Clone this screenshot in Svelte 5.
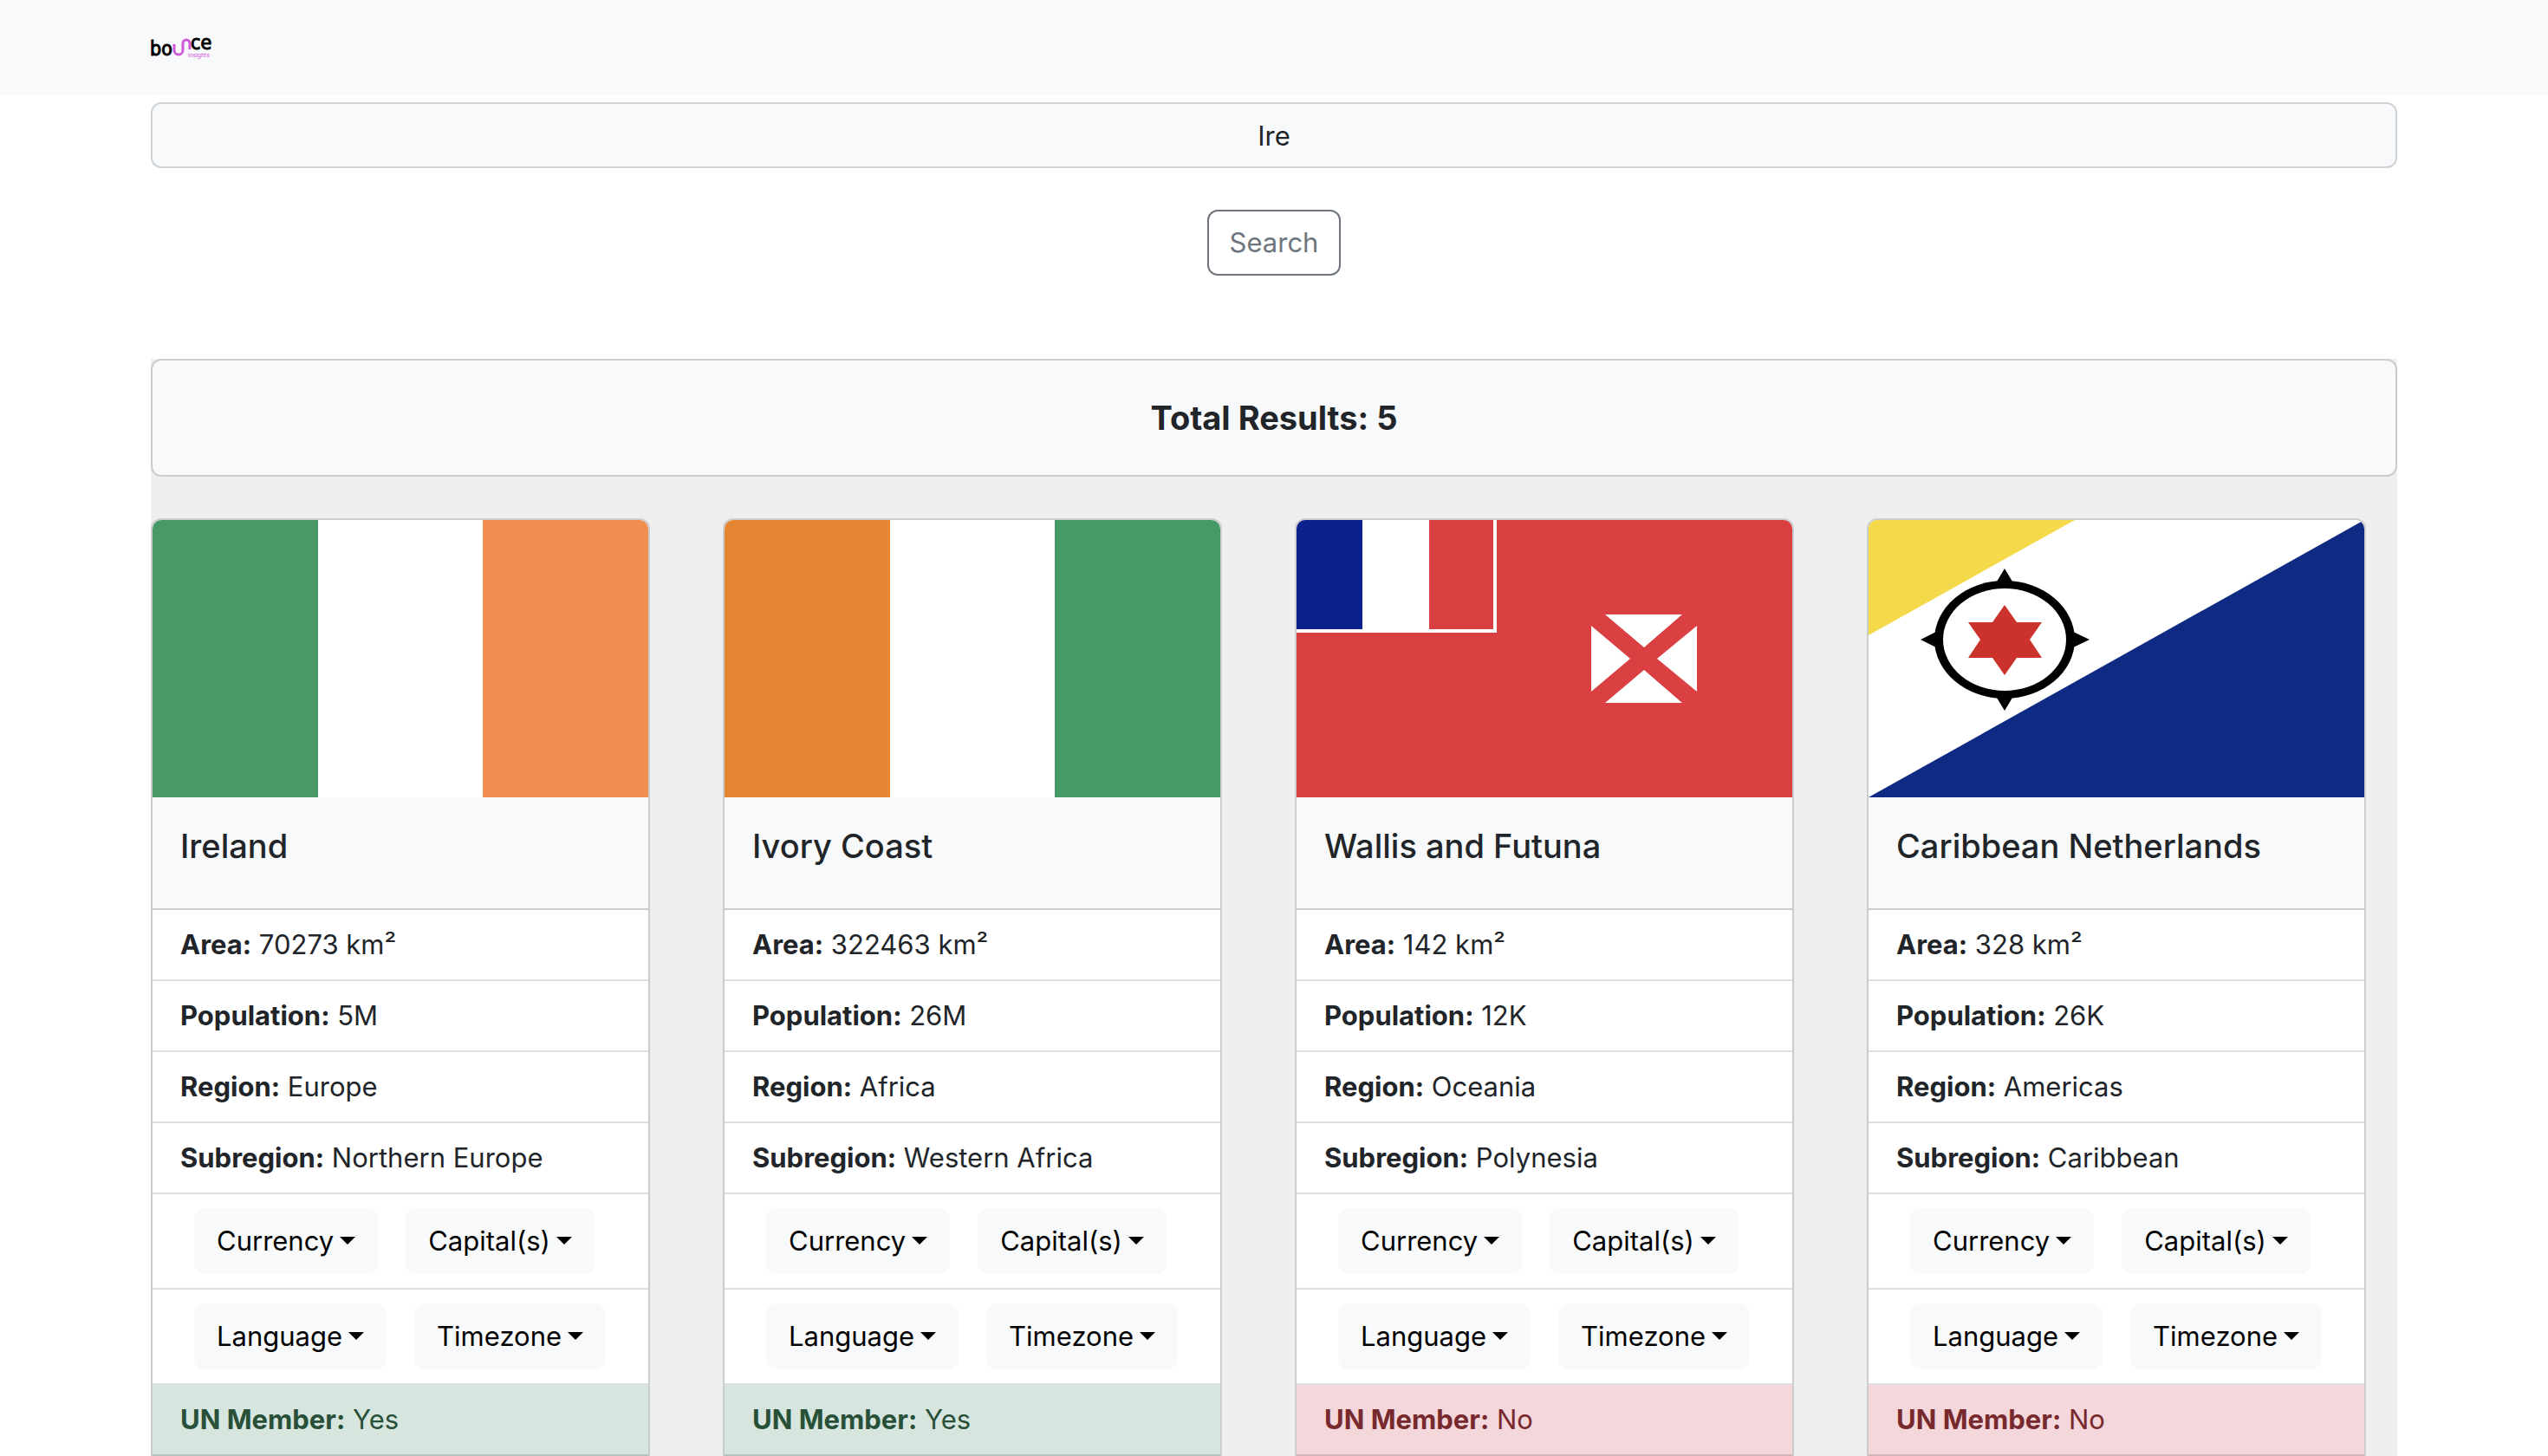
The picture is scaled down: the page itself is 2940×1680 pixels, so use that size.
<script>
  let query = $state('Ire');

  const menus = [
    ['Currency', 'Capital(s)'],
    ['Language', 'Timezone'],
  ];

  const countries = [
    { name: 'Ireland', flag: 'ie', area: 70273, population: '5M', region: 'Europe', subregion: 'Northern Europe', unMember: true },
    { name: 'Ivory Coast', flag: 'ci', area: 322463, population: '26M', region: 'Africa', subregion: 'Western Africa', unMember: true },
    { name: 'Wallis and Futuna', flag: 'wf', area: 142, population: '12K', region: 'Oceania', subregion: 'Polynesia', unMember: false },
    { name: 'Caribbean Netherlands', flag: 'bq', area: 328, population: '26K', region: 'Americas', subregion: 'Caribbean', unMember: false },
  ];
</script>

{#snippet tricolour(left, right)}
  <rect width="572" height="320" fill="#ffffff" />
  <rect width="191" height="320" fill={left} />
  <rect x="381" width="191" height="320" fill={right} />
{/snippet}

<header class="navbar">
  <a class="brand" href="/" aria-label="bounce insights">
    <svg class="logo" viewBox="0 0 72 28" aria-hidden="true">
      <text class="word" x="-1" y="23">bo</text>
      <path d="M27 10V17a5 5 0 0 0 10 0V9a4 4 0 0 1 8 0V16" fill="none" stroke="#cf5bd9" stroke-width="3" />
      <text class="word" x="46" y="16">ce</text>
      <text class="tag" x="43" y="25">Insights</text>
    </svg>
  </a>
</header>

<main class="container">
  <form class="search" onsubmit={(e) => e.preventDefault()}>
    <input type="text" aria-label="Country name" bind:value={query} />
    <button class="btn btn-outline" type="submit">Search</button>
  </form>

  <section class="results">
    <div class="total"><h2>Total Results: 5</h2></div>

    <div class="cards">
      {#each countries as c}
        <article class="card">
          <svg class="flag" viewBox="0 0 572 320" preserveAspectRatio="none" role="img" aria-label="Flag of {c.name}">
            {#if c.flag === 'ie'}
              {@render tricolour('#4a9868', '#f08f50')}
            {:else if c.flag === 'ci'}
              {@render tricolour('#e68632', '#479a65')}
            {:else if c.flag === 'wf'}
              <rect width="572" height="320" fill="#da3f41" />
              <rect width="231" height="130" fill="#ffffff" />
              <rect width="76" height="126" fill="#0a218e" />
              <rect x="153" width="74" height="126" fill="#da3f41" />
              <path d="M356 109H445L401 147ZM356 211H445L401 173ZM340 122V198L385 160ZM462 122V198L416 160Z" fill="#ffffff" />
            {:else}
              <rect width="572" height="320" fill="#ffffff" />
              <path d="M0 0H238L0 133Z" fill="#f4da4a" />
              <path d="M0 320L572 0V320Z" fill="#0f2a82" />
              <ellipse cx="157" cy="138" rx="81" ry="68" />
              <path d="M157 56L169 76H145ZM157 220L169 200H145ZM60 138L82 127V149ZM255 138L232 127V149Z" />
              <ellipse cx="157" cy="138" rx="71" ry="59" fill="#ffffff" />
              <path d="M157 98L171 118H200L186 138L200 159H171L157 179L143 159H115L129 138L115 118H143Z" fill="#cb322c" />
            {/if}
          </svg>
          <div class="card-body"><h3>{c.name}</h3></div>
          <ul class="list">
            <li><b>Area:</b> {c.area} km²</li>
            <li><b>Population:</b> {c.population}</li>
            <li><b>Region:</b> {c.region}</li>
            <li><b>Subregion:</b> {c.subregion}</li>
            {#each menus as row}
              <li class="menus">
                {#each row as label}
                  <button class="btn btn-light" type="button" aria-haspopup="true">{label}<span class="caret"></span></button>
                {/each}
              </li>
            {/each}
            <li class={c.unMember ? 'yes' : 'no'}><b>UN Member:</b> {c.unMember ? 'Yes' : 'No'}</li>
          </ul>
        </article>
      {/each}
    </div>
  </section>
</main>

<style>
  :global(body) {
    margin: 0;
    background: #ffffff;
    color: #212529;
    font-family: Inter, 'Liberation Sans', sans-serif;
    font-size: 31px;
    line-height: 48px;
  }
  :global(*) {
    box-sizing: border-box;
  }
  .navbar {
    display: flex;
    align-items: center;
    height: 110px;
    padding: 0 174px;
    background: #f8f9fb;
  }
  .brand {
    display: flex;
  }
  .logo {
    width: 72px;
    height: 28px;
    overflow: visible;
  }
  .word {
    font-family: 'DejaVu Sans Condensed', Roboto, sans-serif;
    font-size: 23px;
    fill: #000000;
    stroke: #000000;
    stroke-width: 1;
  }
  .tag {
    font-family: Roboto, sans-serif;
    font-size: 7px;
    fill: #cf5bd9;
  }
  .container {
    padding: 8px 174px 0;
  }
  .search {
    display: flex;
    flex-direction: column;
    align-items: center;
    gap: 48px;
    margin-bottom: 96px;
  }
  .search input {
    width: 100%;
    height: 76px;
    padding: 12px 24px;
    border: 2px solid #ced3d8;
    border-radius: 12px;
    background: #f8f9fb;
    color: inherit;
    font: inherit;
    text-align: center;
    outline: none;
  }
  .btn {
    height: 76px;
    padding: 12px 24px;
    border: 2px solid transparent;
    border-radius: 12px;
    font: inherit;
    white-space: nowrap;
  }
  .btn-outline {
    border-color: #6e757c;
    background: #ffffff;
    color: #6e757c;
  }
  .btn-light {
    background: #f8f9fb;
    color: #000000;
  }
  .caret {
    display: inline-block;
    margin-left: 7px;
    vertical-align: 7px;
    border-top: 9px solid #000000;
    border-left: 9px solid transparent;
    border-right: 9px solid transparent;
  }
  .results {
    background: #efefef;
  }
  .total {
    padding: 42px 32px;
    border: 2px solid #cbcccd;
    border-radius: 12px;
    background: #f8f9fb;
    text-align: center;
  }
  h2,
  h3 {
    margin: 0;
    font-size: 38px;
    line-height: 48px;
  }
  h2 {
    font-weight: 700;
  }
  h3 {
    font-weight: 500;
  }
  .cards {
    display: grid;
    grid-template-columns: repeat(4, 1fr);
    column-gap: 48px;
    padding-top: 48px;
  }
  .card {
    width: 100%;
    max-width: 576px;
    border: 2px solid #cbcccd;
    border-bottom: 0;
    border-radius: 12px 12px 0 0;
    background: #ffffff;
    overflow: hidden;
  }
  .flag {
    display: block;
    width: 100%;
    height: 320px;
  }
  .card-body {
    padding: 32px 32px 48px;
    background: #f8f9fb;
  }
  .list {
    margin: 0;
    padding: 0;
    border-top: 2px solid #cbcccd;
    list-style: none;
  }
  .list li {
    padding: 16px 32px;
    border-bottom: 2px solid #dedfdf;
  }
  .list .menus {
    display: flex;
    gap: 32px;
    padding: 16px 48px;
  }
  .list .yes {
    border-color: #b4c6bd;
    background: #d6e6de;
    color: #285038;
  }
  .list .no {
    border-color: #d2b9bc;
    background: #f3d7da;
    color: #78292e;
  }
</style>
